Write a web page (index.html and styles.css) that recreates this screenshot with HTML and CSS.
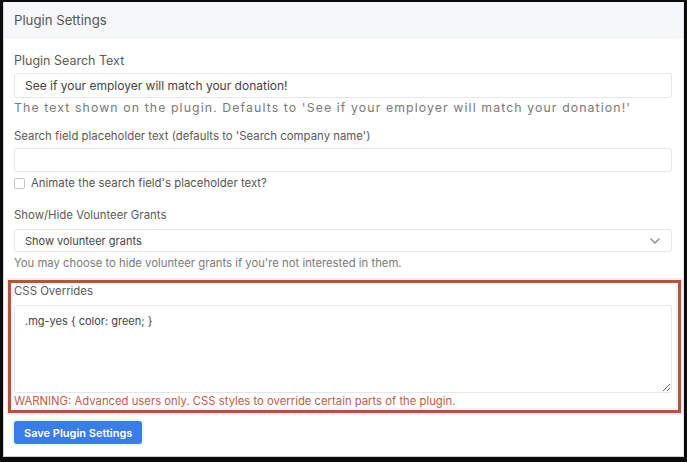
FILE: index.html
```html
<!DOCTYPE html>
<html lang="en">
<head>
  <meta charset="UTF-8">
  <meta name="viewport" content="width=device-width, initial-scale=1.0">
  <title>Plugin Settings</title>
  <link rel="stylesheet" href="styles.css">
</head>
<body>

  <div class="frame">
    <div class="card">
      <div class="card-header">Plugin Settings</div>

      <div class="card-body">
        <div class="field field-search">
          <label class="field-label" for="search-text">Plugin Search Text</label>
          <input class="control" type="text" id="search-text" value="See if your employer will match your donation!">
          <div class="help help-wide">The text shown on the plugin. Defaults to 'See if your employer will match your donation!'</div>
        </div>

        <div class="field field-placeholder">
          <label class="field-label" for="placeholder-text">Search field placeholder text (defaults to 'Search company name')</label>
          <input class="control control-short" type="text" id="placeholder-text">
          <label class="check-row">
            <input type="checkbox" class="check">
            <span>Animate the search field's placeholder text?</span>
          </label>
        </div>

        <div class="field field-volunteer">
          <label class="field-label" for="volunteer">Show/Hide Volunteer Grants</label>
          <div class="select-wrap">
            <select class="control select" id="volunteer">
              <option>Show volunteer grants</option>
              <option>Hide volunteer grants</option>
            </select>
            <svg class="chevron" width="10" height="6" viewBox="0 0 10 6">
              <path d="M1 1l4 4 4-4" fill="none" stroke="#8a8a8a" stroke-width="1.4" stroke-linecap="round" stroke-linejoin="round"/>
            </svg>
          </div>
          <div class="help">You may choose to hide volunteer grants if you're not interested in them.</div>
        </div>

        <div class="field field-overrides">
          <label class="field-label" for="css-overrides">CSS Overrides</label>
          <textarea class="control textarea" id="css-overrides">.mg-yes { color: green; }</textarea>
          <div class="help warning">WARNING: Advanced users only. CSS styles to override certain parts of the plugin.</div>
        </div>

        <button class="btn-save" type="button">Save Plugin Settings</button>
      </div>
    </div>
  </div>

</body>
</html>
```

FILE: styles.css
```css
* {
  box-sizing: border-box;
}

body {
  margin: 0;
  background: #0b0b0b;
  font-family: 'Inter', 'Liberation Sans', sans-serif;
  color: #555;
}

.frame {
  width: 687px;
  height: 462px;
  padding: 2px 3px 5px 3px;
}

.card {
  height: 100%;
  background: #fff;
  border-left: 1px solid #d6d6d6;
  border-right: 1px solid #e2e2e2;
  border-bottom: 1px solid #d0d0d0;
}

.card-header {
  height: 36px;
  padding: 0 10px;
  background: #f6f7fa;
  border-bottom: 1px solid #eef0f3;
  font-size: 13.2px;
  line-height: 36px;
  color: #555;
}

.card-body {
  padding: 15px 11px 0 10px;
}

.field-label {
  display: block;
  font-size: 11.4px;
  line-height: 16px;
  color: #5a5a5a;
  margin-bottom: 5px;
}

.field-search {
  margin-bottom: 12px;
}

.field-search .field-label {
  font-size: 12.5px;
  margin-bottom: 4px;
}

.control {
  display: block;
  width: 100%;
  height: 25px;
  padding: 0 10px;
  border: 1px solid #e4e6ea;
  border-radius: 3px;
  background: #fff;
  font-family: inherit;
  font-size: 12px;
  color: #444;
  outline: none;
}

.control-short {
  height: 24px;
  margin-top: -1px;
}

.help {
  font-size: 11.3px;
  line-height: 16px;
  color: #7a7a7a;
  margin-top: 1px;
}

.help-wide {
  font-size: 12.3px;
  letter-spacing: 1.1px;
  margin-top: 2px;
}

.field-placeholder {
  margin-bottom: 16px;
}

.check-row {
  display: flex;
  align-items: center;
  gap: 6px;
  margin-top: 3px;
  font-size: 11.4px;
  line-height: 16px;
  color: #555;
}

.check {
  appearance: none;
  margin: 0;
  width: 11px;
  height: 11px;
  border: 1px solid #c4c6ca;
  border-radius: 2px;
  background: #fff;
}

.field-volunteer {
  margin-bottom: 9px;
}

.select-wrap {
  position: relative;
  margin-top: 6px;
}

.select {
  appearance: none;
  height: 23px;
  font-size: 11px;
}

.chevron {
  position: absolute;
  right: 12px;
  top: 9px;
}

.select-wrap + .help {
  margin-top: 3px;
}

.field-overrides {
  margin: 0 -9px 8px -6px;
  padding: 0 6px 0 3px;
  border: 3px solid #a75a3e;
  box-shadow: 0 0 0 2px #fde6f2, inset 0 0 0 2px #fdeef6;
}

.field-overrides .field-label {
  margin-bottom: 6px;
}

.textarea {
  height: 88px;
  padding: 7px 10px;
  font-size: 11px;
  line-height: 16px;
  resize: vertical;
}

.warning {
  color: #c65a4c;
  margin-top: 0;
  line-height: 17px;
}

.btn-save {
  display: block;
  height: 23px;
  padding: 0 10px;
  border: none;
  border-radius: 3px;
  background: #3b7de6;
  color: #fff;
  font-family: inherit;
  font-size: 11px;
  font-weight: 600;
  box-shadow: 0 0 0 2px #e6fbff;
  cursor: pointer;
}
```
